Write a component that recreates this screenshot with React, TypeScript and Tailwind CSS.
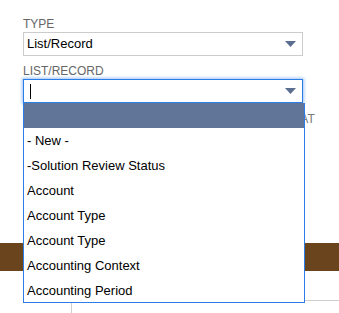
const options = [
  "",
  "- New -",
  "-Solution Review Status",
  "Account",
  "Account Type",
  "Account Type",
  "Accounting Context",
  "Accounting Period",
];

function Arrow() {
  return (
    <svg width="11" height="6" viewBox="0 0 11 6" className="shrink-0">
      <polygon points="0,0 11,0 5.5,6" fill="#5b6e90" />
    </svg>
  );
}

export default function App() {
  return (
    <div
      className="relative h-[313px] w-[339px] overflow-hidden bg-white"
      style={{ fontFamily: '"Liberation Sans", Arial, sans-serif' }}
    >
      <div className="pt-[17px] pl-[23px]">
        <div className="w-[280px]">
          <div className="text-[12px] leading-[14px] text-[#666]">TYPE</div>
          <div className="mt-px flex h-[24px] items-center justify-between border border-[#cccccc] pl-[3px] pr-[6px] text-[13px] text-black">
            <span>List/Record</span>
            <Arrow />
          </div>

          <div className="mt-[8px] text-[12px] leading-[14px] text-[#666]">LIST/RECORD</div>
          <div className="relative mt-px">
            <div className="flex h-[24px] items-center justify-between border border-[#2b7de9] pl-[6px] pr-[6px] shadow-[0_0_3px_1px_#9cc3f3]">
              <span className="h-[15px] w-px bg-black" />
              <Arrow />
            </div>
            <ul className="absolute top-full left-0 z-10 h-[200px] w-[282px] overflow-hidden border-x border-b border-[#2b7de9] bg-white text-[13px] text-black">
              {options.map((o, i) => (
                <li
                  key={i}
                  className={`flex h-[25px] items-center pl-[3px] pt-px ${i === 0 ? "bg-[#617599]" : ""}`}
                >
                  {o}
                </li>
              ))}
            </ul>
          </div>
        </div>
      </div>

      <div className="mt-[9px] pl-[265px] text-[12px] leading-[14px] text-[#777]">FORMAT</div>

      <div className="mt-[117px] h-[28px] w-full bg-[#6a441c]" />

      <div className="mt-[29px] ml-[71px] h-[20px] border-t border-l border-[#cfcfcf]" />
    </div>
  );
}
